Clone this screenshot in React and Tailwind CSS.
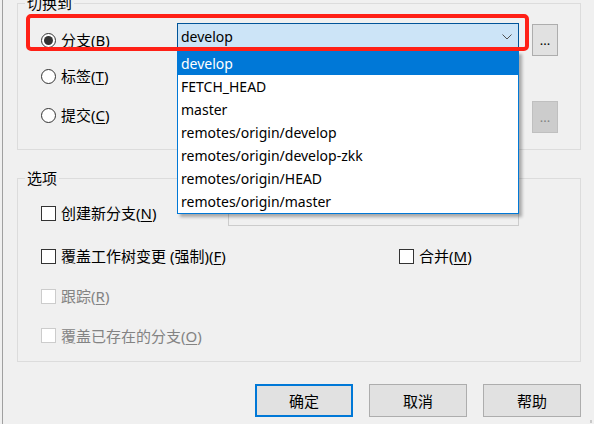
import React from "react";

const FONT = { fontFamily: '"Noto Sans", "Noto Sans CJK SC", sans-serif' };

const branches = [
  "develop",
  "FETCH_HEAD",
  "master",
  "remotes/origin/develop",
  "remotes/origin/develop-zkk",
  "remotes/origin/HEAD",
  "remotes/origin/master",
];

function Key({ k }) {
  return (
    <span>
      (<span className="underline underline-offset-2">{k}</span>)
    </span>
  );
}

function Radio({ checked, children }) {
  return (
    <div className="flex items-center gap-[5px]">
      <span className="flex h-[15px] w-[15px] items-center justify-center rounded-full border border-[#333] bg-white">
        {checked && <span className="h-[9px] w-[9px] rounded-full bg-[#333]" />}
      </span>
      <span className="leading-[20px]">{children}</span>
    </div>
  );
}

function Check({ disabled, children }) {
  return (
    <div className="flex items-center gap-[5px]">
      <span
        className={
          "h-[15px] w-[15px] border " +
          (disabled ? "border-[#cccccc] bg-white" : "border-[#333] bg-white")
        }
      />
      <span className={"leading-[20px] " + (disabled ? "text-[#838383]" : "text-black")}>
        {children}
      </span>
    </div>
  );
}

function DotsButton({ disabled, className = "" }) {
  return (
    <button
      className={
        "flex h-[32px] w-[26px] items-end justify-center border pb-[8px] text-[13px] leading-none " +
        (disabled
          ? "border-[#bfbfbf] bg-[#cccccc] text-[#838383]"
          : "border-[#adadad] bg-[#e1e1e1] text-black") +
        " " +
        className
      }
    >
      ...
    </button>
  );
}

function Button({ primary, children }) {
  return (
    <button
      className={
        "h-[33px] w-[98px] bg-[#e1e1e1] leading-[20px] " +
        (primary ? "border-2 border-[#0078d7]" : "border border-[#adadad]")
      }
    >
      {children}
    </button>
  );
}

export default function App() {
  return (
    <div
      className="relative h-[424px] w-[594px] overflow-hidden bg-[#f0f0f0] pl-[2px] text-[15px] text-black"
      style={FONT}
    >
      <div className="flex h-full flex-col border-l border-[#a0a0a0] pl-[14px]">
        {/* 切换到 */}
        <fieldset className="mt-[-7px] h-[157px] w-[564px] border border-[#dcdcdc]">
          <legend className="ml-[7px] px-[2px] leading-[20px]">切换到</legend>
          <div className="pl-[23px]">
            <div className="mt-[10px] flex h-[34px] items-center">
              <div className="w-[136px]">
                <Radio checked>
                  分支<Key k="B" />
                </Radio>
              </div>
              <div className="flex h-[28px] w-[342px] items-center self-start border border-[#005499] bg-[#cce4f7] pl-[3px] pr-[6px]">
                <span className="flex-1 text-[14px] leading-[20px]">develop</span>
                <svg width="10" height="6" viewBox="0 0 10 6">
                  <polyline points="0.5,0.5 5,5 9.5,0.5" fill="none" stroke="#505050" strokeWidth="1" />
                </svg>
              </div>
              <DotsButton className="ml-[13px] self-start mt-[1px]" />
            </div>
            <div className="flex h-[38px] items-center">
              <div className="w-[136px]">
                <Radio>
                  标签<Key k="T" />
                </Radio>
              </div>
              <div className="h-[27px] w-[342px] border border-[#cccccc] bg-[#f0f0f0]" />
            </div>
            <div className="flex h-[40px] items-center">
              <div className="w-[136px]">
                <Radio>
                  提交<Key k="C" />
                </Radio>
              </div>
              <div className="h-[27px] w-[342px] border border-[#cccccc] bg-[#f0f0f0]" />
              <DotsButton disabled className="ml-[13px] mt-[4px] h-[31px]" />
            </div>
          </div>
        </fieldset>

        {/* 选项 */}
        <fieldset className="mt-[18px] h-[194px] w-[564px] border border-[#dcdcdc]">
          <legend className="ml-[7px] px-[2px] leading-[20px]">选项</legend>
          <div className="pl-[23px] pt-[5px]">
            <div className="flex h-[40px] items-center">
              <div className="w-[187px]">
                <Check>
                  创建新分支<Key k="N" />
                </Check>
              </div>
              <div className="mt-[-1px] h-[27px] w-[291px] border border-[#cccccc] bg-[#f0f0f0]" />
            </div>
            <div className="mt-[3px] flex h-[40px] items-center">
              <div className="w-[358px]">
                <Check>
                  覆盖工作树变更 (强制)<Key k="F" />
                </Check>
              </div>
              <Check>
                合并<Key k="M" />
              </Check>
            </div>
            <div className="flex h-[40px] items-center">
              <Check disabled>
                跟踪<Key k="R" />
              </Check>
            </div>
            <div className="flex h-[39px] items-center">
              <Check disabled>
                覆盖已存在的分支<Key k="O" />
              </Check>
            </div>
          </div>
        </fieldset>

        <div className="mt-[22px] flex w-[564px] justify-end gap-[16px]">
          <Button primary>确定</Button>
          <Button>取消</Button>
          <Button>帮助</Button>
        </div>
      </div>

      {/* open branch list */}
      <ul className="absolute left-[177px] top-[51px] w-[342px] border border-[#0078d7] bg-white text-[14px] shadow-[3px_3px_3px_rgba(0,0,0,0.3)]">
        {branches.map((b, i) => (
          <li
            key={b}
            className={
              "h-[23px] pl-[3px] leading-[23px] " +
              (i === 0 ? "bg-[#0078d7] text-white" : "text-black")
            }
          >
            {b}
          </li>
        ))}
      </ul>

      {/* highlight mark */}
      <div className="pointer-events-none absolute left-[26px] top-[14px] h-[37px] w-[503px] rounded-[5px] border-4 border-[#ff2016]" />

      <div className="absolute bottom-[1px] right-[2px] h-[3px] w-[2px] bg-[#c8c8c8]" />
    </div>
  );
}
